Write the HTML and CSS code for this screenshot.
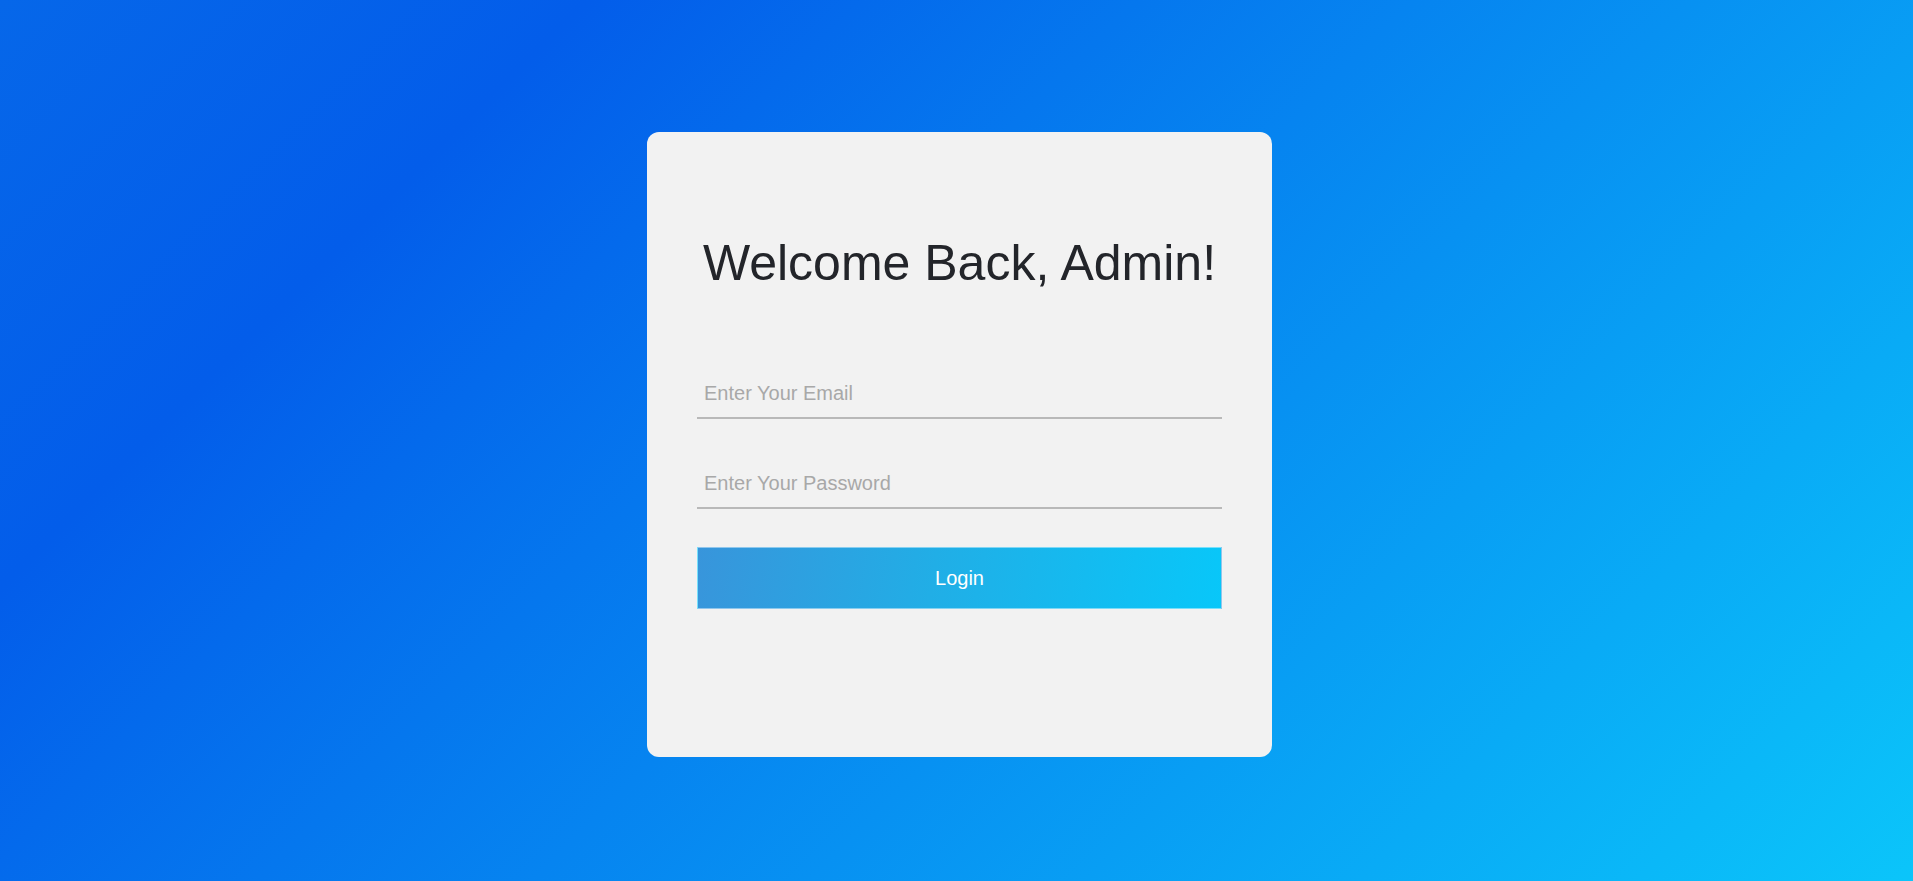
FILE: index.html
```html
<!DOCTYPE html>
<html lang="en">
<head>
<meta charset="utf-8">
<title>Admin Login</title>
<link rel="stylesheet" href="styles.css">
</head>
<body>
<main class="page">
  <section class="card">
    <h1 class="title">Welcome Back, Admin!</h1>
    <form class="form">
      <input class="field field-email" type="email" placeholder="Enter Your Email">
      <input class="field field-password" type="password" placeholder="Enter Your Password">
      <button class="login-btn" type="button">Login</button>
    </form>
  </section>
</main>
</body>
</html>
```

FILE: styles.css
```css
* {
  box-sizing: border-box;
}

html, body {
  margin: 0;
  padding: 0;
}

body {
  font-family: "Liberation Sans", Arial, sans-serif;
  background: linear-gradient(135deg, #0667e9 0%, #035dea 21%, #0bc5fa 100%);
  min-height: 100vh;
}

.page {
  min-height: 100vh;
  display: flex;
  align-items: center;
  justify-content: center;
  padding: 8px 0 0 6px;
}

.card {
  width: 625px;
  height: 625px;
  background: #f2f2f2;
  border-radius: 12px;
  padding: 0 50px;
}

.title {
  margin: 103px 0 0;
  font-size: 50px;
  font-weight: 400;
  line-height: 56px;
  color: #23252a;
  text-align: center;
}

.form {
  display: flex;
  flex-direction: column;
  margin-top: 80px;
}

.field {
  display: block;
  width: 100%;
  font-family: "Liberation Sans", Arial, sans-serif;
  font-size: 20px;
  line-height: 23px;
  height: 48px;
  padding: 11px 7px 12px;
  border: none;
  border-bottom: 2px solid #b9b9b9;
  background: transparent;
  color: #333;
  outline: none;
}

.field::placeholder {
  color: #a8a8a8;
}

.field-password {
  margin-top: 42px;
}

.login-btn {
  margin-top: 38px;
  height: 62px;
  width: 100%;
  padding-top: 2px;
  border: 1px solid rgba(255, 255, 255, 0.45);
  background: linear-gradient(100deg, #3895db 0%, #21aee6 45%, #08c7f9 100%);
  color: #ffffff;
  font-family: "Liberation Sans", Arial, sans-serif;
  font-size: 20px;
  cursor: pointer;
}
```
